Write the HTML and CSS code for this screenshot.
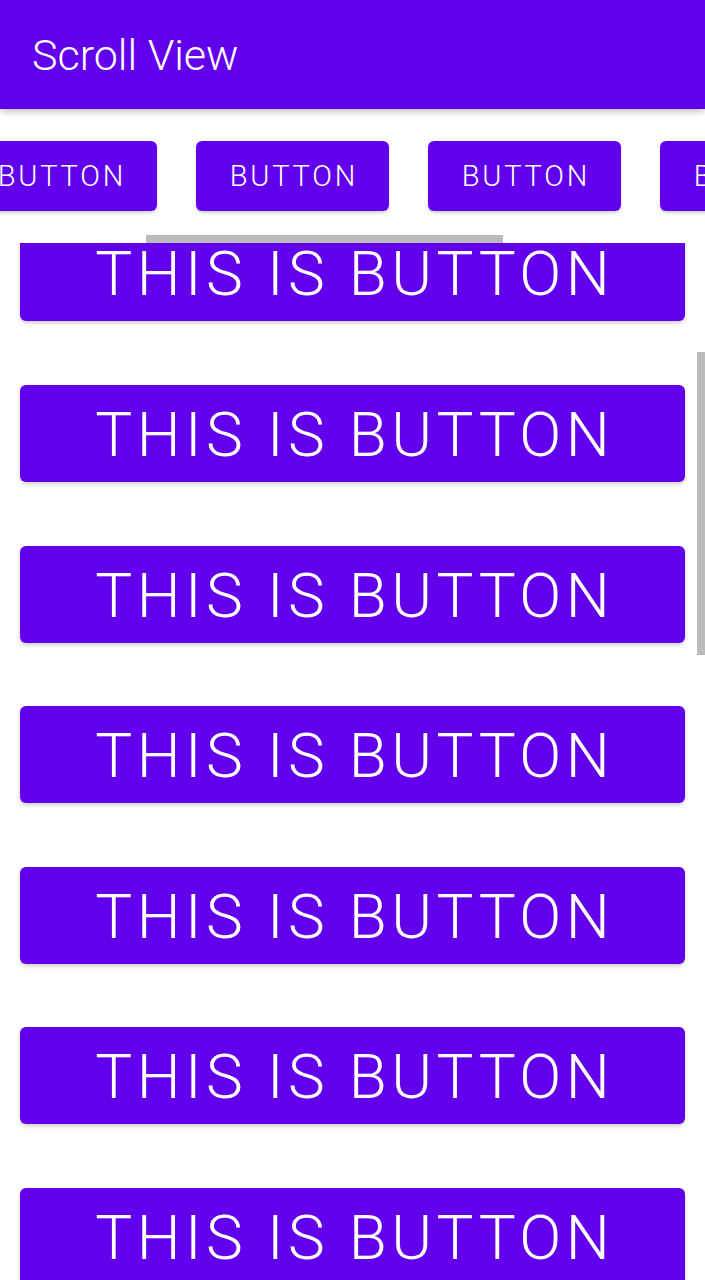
FILE: index.html
```html
<!DOCTYPE html>
<html>
<head>
<meta charset="utf-8">
<link rel="stylesheet" href="styles.css">
</head>
<body>
<div class="screen">
  <header class="appbar">
    <h1 class="title">Scroll View</h1>
  </header>
  <section class="hscroll">
    <div class="hrow">
      <div class="btn-small">BUTTON</div>
      <div class="btn-small">BUTTON</div>
      <div class="btn-small">BUTTON</div>
      <div class="btn-small">BUTTON</div>
    </div>
    <div class="hbar"></div>
  </section>
  <section class="vscroll">
    <div class="vcol">
      <div class="btn-big">THIS IS BUTTON</div>
      <div class="btn-big">THIS IS BUTTON</div>
      <div class="btn-big">THIS IS BUTTON</div>
      <div class="btn-big">THIS IS BUTTON</div>
      <div class="btn-big">THIS IS BUTTON</div>
      <div class="btn-big">THIS IS BUTTON</div>
      <div class="btn-big">THIS IS BUTTON</div>
      <div class="btn-big">THIS IS BUTTON</div>
    </div>
    <div class="vbar"></div>
  </section>
</div>
</body>
</html>
```
FILE: styles.css
```css
html, body {
  margin: 0;
  padding: 0;
  background: #ffffff;
}
body {
  font-family: Roboto, "Liberation Sans", sans-serif;
}
.screen {
  width: 705px;
  height: 1280px;
  overflow: hidden;
  display: flex;
  flex-direction: column;
  background: #ffffff;
}
.appbar {
  height: 109px;
  flex: none;
  background: #6200ee;
  display: flex;
  align-items: center;
  padding-left: 32px;
  box-shadow: 0 3px 6px rgba(0, 0, 0, 0.22);
  position: relative;
  z-index: 2;
}
.title {
  margin: 0;
  margin-top: 2px;
  color: #ffffff;
  font-size: 43px;
  font-weight: 300;
  line-height: 1;
}
.hscroll {
  height: 134px;
  flex: none;
  position: relative;
  overflow: hidden;
}
.hrow {
  display: flex;
  gap: 39px;
  margin-left: -36px;
  padding-top: 32px;
}
.btn-small {
  flex: none;
  width: 193px;
  height: 70px;
  border-radius: 6px;
  background: #6200ee;
  color: #ffffff;
  font-size: 29px;
  font-weight: 300;
  letter-spacing: 2.8px;
  padding-left: 2.8px;
  box-sizing: border-box;
  display: flex;
  align-items: center;
  justify-content: center;
  box-shadow: 0 2px 3px rgba(0, 0, 0, 0.18);
}
.hbar {
  position: absolute;
  left: 146px;
  top: 126px;
  width: 357px;
  height: 8px;
  background: #bcbcbc;
}
.vscroll {
  flex: 1;
  position: relative;
  overflow: hidden;
}
.vcol {
  display: flex;
  flex-direction: column;
  gap: 63.6px;
  padding: 0 20px;
  margin-top: -18.6px;
}
.btn-big {
  flex: none;
  height: 97px;
  border-radius: 6px;
  background: #6200ee;
  color: #ffffff;
  font-size: 62px;
  font-weight: 300;
  letter-spacing: 4.5px;
  padding-left: 4.5px;
  padding-top: 2px;
  box-sizing: border-box;
  display: flex;
  align-items: center;
  justify-content: center;
  box-shadow: 0 2px 4px rgba(0, 0, 0, 0.2);
}
.vbar {
  position: absolute;
  right: 0;
  top: 109px;
  width: 8px;
  height: 303px;
  background: #bcbcbc;
}
```
